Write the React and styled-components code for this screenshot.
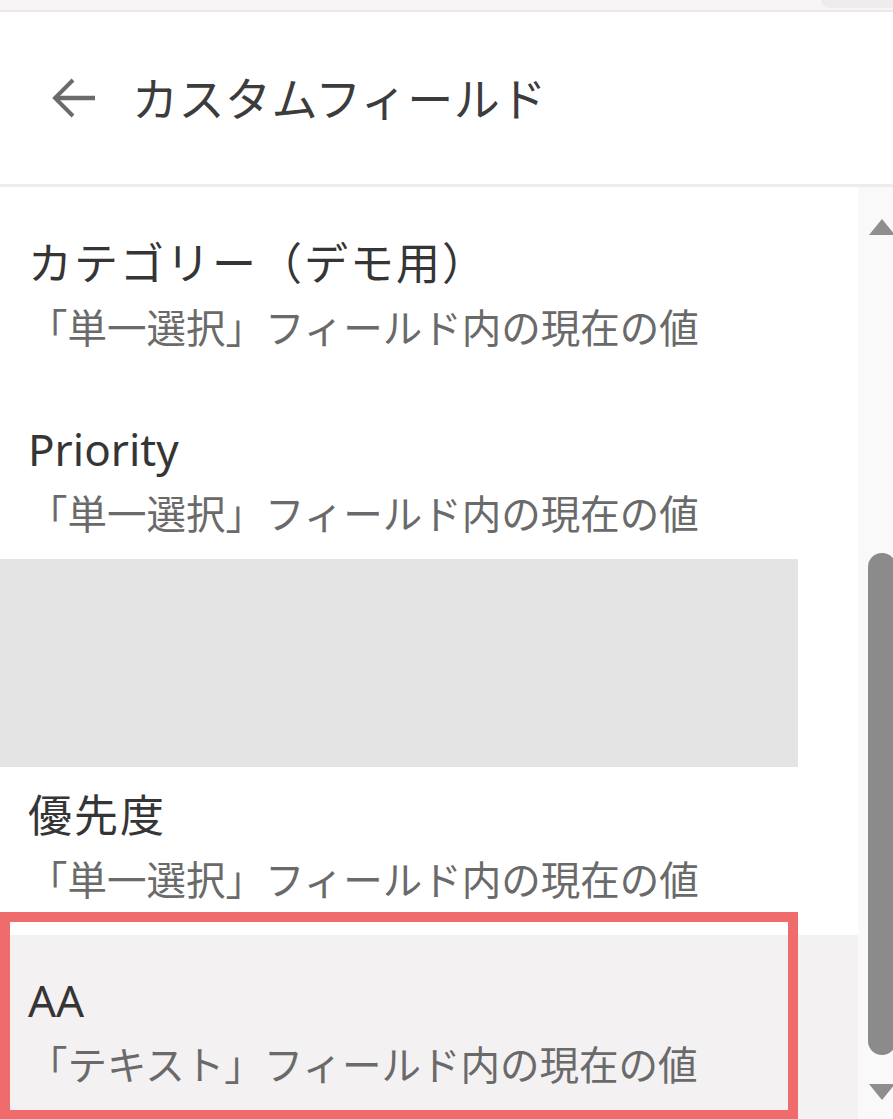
import React from 'react'
import styled, { createGlobalStyle } from 'styled-components'

const GlobalStyle = createGlobalStyle`
  html, body {
    margin: 0;
    padding: 0;
    background: #ffffff;
    overflow: hidden;
  }
  body {
    font-family: "Noto Sans", "Noto Sans CJK JP", sans-serif;
  }
`;

const Page = styled.div`
  width: 100vw;
  height: 1119px;
  overflow: hidden;
  display: flex;
  flex-direction: column;
  background: #fff;
`;

const TopStrip = styled.div`
  height: 10px;
  flex-shrink: 0;
  background: #f7f5f6;
  border-bottom: 2px solid #ebe7e9;
  display: flex;
  justify-content: flex-end;
`;

const TopTab = styled.div`
  width: 72px;
  height: 8px;
  background: #efecee;
  border-bottom-left-radius: 8px;
`;

const Header = styled.div`
  height: 172px;
  flex-shrink: 0;
  display: flex;
  align-items: center;
  padding-left: 50px;
  gap: 36px;
  border-bottom: 3px solid #efebed;
`;

const BackButton = styled.button`
  border: none;
  background: none;
  padding: 0;
  display: flex;
  color: #6b6b6b;
  cursor: pointer;
`;

const HeaderTitle = styled.h1`
  margin: 0;
  font-size: 46px;
  font-weight: 400;
  letter-spacing: 0.5px;
  color: #3c3c3c;
  line-height: 60px;
`;

const Body = styled.div`
  flex: 1;
  min-height: 0;
  display: grid;
  grid-template-columns: 858px 48px;
`;

const List = styled.ul`
  list-style: none;
  margin: 0;
  padding: 0;
  display: flex;
  flex-direction: column;
  overflow: hidden;
`;

const Row = styled.li`
  position: relative;
  display: flex;
  flex-direction: column;
  gap: 5px;
  padding: ${p => p.pad};
  padding-left: 28px;
  background: ${p => (p.active ? '#f3f1f2' : 'transparent')};

  ${p => p.active && `
    &::before {
      content: '';
      position: absolute;
      left: 0;
      top: -23px;
      width: 798px;
      bottom: -1px;
      box-sizing: border-box;
      border: 10px solid #f06b6b;
      pointer-events: none;
    }
  `}
`;

const Title = styled.div`
  font-size: 44px;
  line-height: 60px;
  letter-spacing: ${p => (p.cjk ? '2px' : '0')};
  color: #353535;
  white-space: nowrap;
`;

const Sub = styled.div`
  font-size: 39.5px;
  line-height: 60px;
  color: #6a6a6a;
  white-space: nowrap;
`;

const Placeholder = styled.li`
  width: 798px;
  height: 208px;
  flex-shrink: 0;
  background: #e4e4e4;
`;

const ScrollBar = styled.div`
  background: #f9f9f9;
  display: flex;
  flex-direction: column;
  align-items: center;
`;

const Arrow = styled.svg`
  flex-shrink: 0;
  margin: ${p => p.m};
`;

const Track = styled.div`
  flex: 1;
  width: 28px;
  display: flex;
  flex-direction: column;
`;

const Thumb = styled.div`
  width: 28px;
  background: #8b8b8b;
  border-radius: 14px;
`;

const fields = [
  { id: 1, title: 'カテゴリー（デモ用）', cjk: true, sub: '「単一選択」フィールド内の現在の値', pad: '46px 0 15px' },
  { id: 2, title: 'Priority', sub: '「単一選択」フィールド内の現在の値', pad: '46px 0 15px' },
  { id: 'gap' },
  { id: 4, title: '優先度', cjk: true, sub: '「単一選択」フィールド内の現在の値', pad: '18px 0 25px' },
  { id: 5, title: 'AA', sub: '「テキスト」フィールド内の現在の値', pad: '35px 0 24px', active: true },
];

const App = () => {
  return (
    <Page>
      <GlobalStyle />
      <TopStrip>
        <TopTab />
      </TopStrip>
      <Header>
        <BackButton aria-label="戻る">
          <svg width="46" height="42" viewBox="0 0 46 42" fill="none">
            <path d="M45 21H5" stroke="currentColor" strokeWidth="4.5" />
            <path d="M23 3L5 21L23 39" stroke="currentColor" strokeWidth="4" />
          </svg>
        </BackButton>
        <HeaderTitle>カスタムフィールド</HeaderTitle>
      </Header>
      <Body>
        <List>
          {fields.map(f =>
            f.id === 'gap' ? (
              <Placeholder key={f.id} />
            ) : (
              <Row key={f.id} pad={f.pad} active={f.active}>
                <Title cjk={f.cjk}>{f.title}</Title>
                <Sub>{f.sub}</Sub>
              </Row>
            )
          )}
        </List>
        <ScrollBar>
          <Arrow m="32px 0 0" width="26" height="16" viewBox="0 0 26 16">
            <polygon points="13,0 26,16 0,16" fill="#8e8e8e" />
          </Arrow>
          <Track>
            <Thumb style={{ marginTop: 318, height: 502 }} />
          </Track>
          <Arrow m="0 0 19px" width="26" height="16" viewBox="0 0 26 16">
            <polygon points="0,0 26,0 13,16" fill="#8e8e8e" />
          </Arrow>
        </ScrollBar>
      </Body>
    </Page>
  )
}

export default App
